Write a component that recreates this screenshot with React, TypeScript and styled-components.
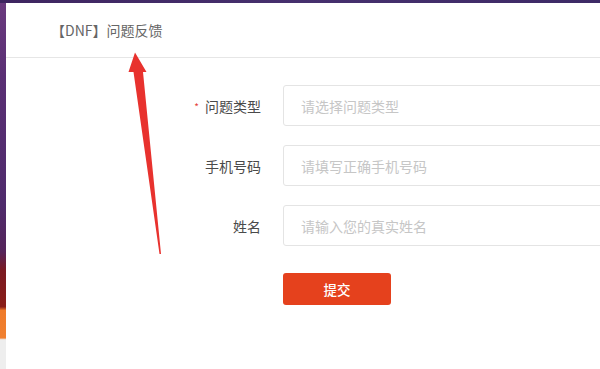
import styled, { createGlobalStyle } from "styled-components";

const GlobalStyle = createGlobalStyle`
  html, body {
    margin: 0;
    padding: 0;
    background: #ffffff;
  }
  body {
    font-family: "Noto Sans CJK SC", "Noto Sans", "Liberation Sans", sans-serif;
  }
  * {
    box-sizing: border-box;
  }
`;

const fields = [
  { label: "问题类型", placeholder: "请选择问题类型", required: true },
  { label: "手机号码", placeholder: "请填写正确手机号码", required: false },
  { label: "姓名", placeholder: "请输入您的真实姓名", required: false },
];

const Arrow = () => (
  <S.ArrowLayer width="600" height="369" viewBox="0 0 600 369">
    <polygon
      points="135,52.5 146.5,72 143,72 161,254 159.5,254 133.5,72 128.5,72"
      fill="#e8322e"
    />
  </S.ArrowLayer>
);

const App = () => {
  return (
    <>
      <GlobalStyle />
      <S.Frame>
        <S.TopStrip />
        <S.SideStrip />
        <S.Panel>
          <S.Header>
            <S.Title>【DNF】问题反馈</S.Title>
          </S.Header>
          <S.Form>
            {fields.map((f) => (
              <S.Row key={f.label}>
                <S.Label>
                  {f.required && <S.Star>*</S.Star>}
                  {f.label}
                </S.Label>
                <S.Input placeholder={f.placeholder} />
              </S.Row>
            ))}
            <S.Row $top={27}>
              <span />
              <S.Submit type="button">提交</S.Submit>
            </S.Row>
          </S.Form>
        </S.Panel>
        <Arrow />
      </S.Frame>
    </>
  );
};

const S = {
  Frame: styled.div`
    position: relative;
    width: 600px;
    height: 369px;
    overflow: hidden;
    display: grid;
    grid-template-columns: 6px 1fr;
    grid-template-rows: 3px 1fr;
  `,
  TopStrip: styled.div`
    grid-column: 1 / 3;
    background: linear-gradient(90deg, #3e2560 0%, #46306e 50%, #3d2a66 100%);
  `,
  SideStrip: styled.div`
    background: linear-gradient(
      180deg,
      #6a3a7e 0%,
      #5a2f74 20%,
      #4f2b6c 55%,
      #55245a 68%,
      #7a1a22 73%,
      #8a1d18 83%,
      #ef7b2a 84%,
      #f08030 91.5%,
      #eeeeee 92%,
      #eeeeee 100%
    );
  `,
  Panel: styled.div`
    background: #ffffff;
    display: flex;
    flex-direction: column;
    min-width: 0;
  `,
  Header: styled.div`
    height: 55px;
    display: flex;
    align-items: center;
    padding: 0 0 0 45px;
    border-bottom: 1px solid #e6e6e6;
  `,
  Title: styled.h1`
    margin: 0;
    font-size: 14px;
    font-weight: 400;
    color: #666666;
    white-space: nowrap;
  `,
  Form: styled.div`
    display: flex;
    flex-direction: column;
    gap: 19px;
    padding-top: 27px;
  `,
  Row: styled.div<{ $top?: number }>`
    display: grid;
    grid-template-columns: 255px 360px;
    column-gap: 22px;
    align-items: center;
    margin-top: ${(p) => (p.$top ? p.$top - 19 : 0)}px;
  `,
  Label: styled.label`
    text-align: right;
    font-size: 14px;
    color: #4a4a4a;
    white-space: nowrap;
  `,
  Star: styled.span`
    color: #e5403a;
    font-size: 10px;
    margin-right: 6px;
    vertical-align: 1px;
  `,
  Input: styled.input`
    height: 41px;
    width: 100%;
    border: 1px solid #e4e4e4;
    border-radius: 3px;
    padding: 0 17px;
    font-family: inherit;
    font-size: 14px;
    color: #333333;
    outline: none;
    background: #ffffff;

    &::placeholder {
      color: #c6c6c6;
    }
  `,
  Submit: styled.button`
    width: 108px;
    height: 32px;
    border: none;
    border-radius: 3px;
    background: #e5411d;
    color: #ffffff;
    font-family: inherit;
    font-size: 13.5px;
    font-weight: 500;
    cursor: pointer;
    padding: 0;
  `,
  ArrowLayer: styled.svg`
    position: absolute;
    top: 0;
    left: 0;
    pointer-events: none;
  `,
};

export default App;
